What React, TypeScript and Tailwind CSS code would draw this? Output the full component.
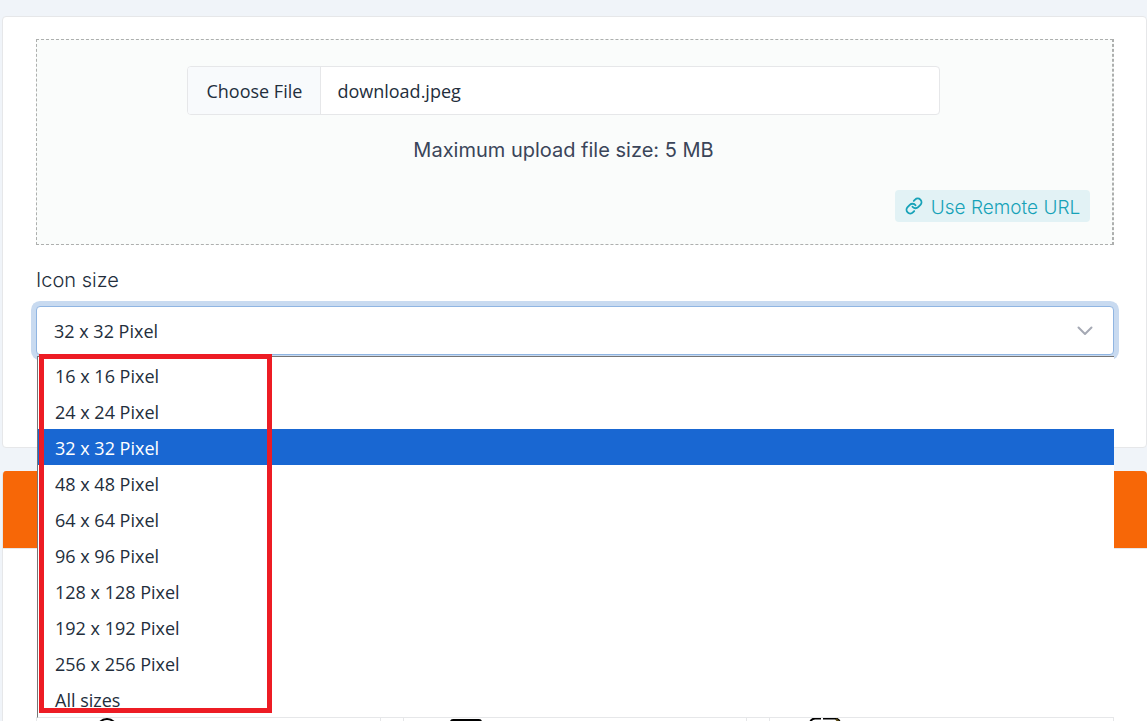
import React, { useState } from 'react';
import { Link } from 'lucide-react';

const SIZES = [
  '16 x 16 Pixel',
  '24 x 24 Pixel',
  '32 x 32 Pixel',
  '48 x 48 Pixel',
  '64 x 64 Pixel',
  '96 x 96 Pixel',
  '128 x 128 Pixel',
  '192 x 192 Pixel',
  '256 x 256 Pixel',
  'All sizes',
];

const FileField: React.FC = () => {
  const [fileName, setFileName] = useState('download.jpeg');

  return (
    <label className="flex h-[49px] w-5/7 cursor-pointer overflow-hidden rounded border border-[#e6e7e9] bg-white text-lg text-[#232e3c]">
      <span className="flex w-[133px] shrink-0 items-center justify-center border-r border-[#e6e7e9] bg-[#f8fafc]">
        Choose File
      </span>
      <span className="flex items-center px-4">{fileName}</span>
      <input
        type="file"
        className="sr-only"
        onChange={(e) => setFileName(e.target.files?.[0]?.name ?? 'download.jpeg')}
      />
    </label>
  );
};

const SizeSelect: React.FC = () => {
  const [size, setSize] = useState('32 x 32 Pixel');

  return (
    <div className="relative">
      <select
        id="icon-size"
        value={size}
        onChange={(e) => setSize(e.target.value)}
        className="block h-[49px] w-full appearance-none rounded border border-[#90b5e2] bg-white pl-[17px] pr-12 text-lg text-[#232e3c] shadow-[0_0_0_5px_#c8daf0] outline-none"
      >
        {SIZES.map((s) => (
          <option key={s}>{s}</option>
        ))}
      </select>
      <svg
        className="pointer-events-none absolute right-5 top-4 h-4 w-[18px]"
        viewBox="0 0 18 16"
        fill="none"
        stroke="#a5a9b4"
        strokeWidth="2"
        strokeLinecap="round"
        strokeLinejoin="round"
      >
        <path d="M2.5 5.5l6.5 6.5l6.5-6.5" />
      </svg>

      {/* Open option list */}
      <ul
        role="listbox"
        aria-label="Icon size options"
        className="absolute left-px right-0 top-[50px] z-10 border-y border-l border-[#767676] border-b-[#e6e7e9] bg-white text-lg text-[#232e3c]"
      >
        {SIZES.map((s) => (
          <li
            key={s}
            role="option"
            aria-selected={s === size}
            onClick={() => setSize(s)}
            className={`flex h-9 items-center pl-[17px] pt-0.5 ${s === size ? 'bg-[#1967d2] text-white' : ''}`}
          >
            {s}
          </li>
        ))}
      </ul>

      {/* Highlight frame */}
      <div className="pointer-events-none absolute left-[3px] top-12 z-20 h-[359px] w-[233px] border-[5px] border-[#ed1c24]" />
    </div>
  );
};

const ToolCard: React.FC<{ children: React.ReactNode }> = ({ children }) => (
  <div className="h-24 border border-[#e6e7e9] bg-white">{children}</div>
);

const App: React.FC = () => {
  return (
    <div className="h-screen overflow-hidden bg-[#f0f4f9] pl-0.5 pt-4 font-['Open_Sans',sans-serif]">
      <section className="rounded border border-[#e6e7e9] bg-white pb-[92px] pl-[33px] pr-8 pt-[22px]">
        <div className="border-r border-dashed border-[#adafae] bg-[#fafcfb]">
          <div className="flex flex-col items-center border border-dashed border-[#adafae] pb-[22px] pr-[22px] pt-[26px]">
            <FileField />
            <p className="mt-[21px] font-['Inter',sans-serif] text-xl leading-7 text-[#3a4559]">
              Maximum upload file size: 5 MB
            </p>
            <button
              type="button"
              className="mt-[26px] flex h-8 w-[195px] items-center justify-center gap-2 self-end rounded bg-[#e2f2f5] font-['Inter',sans-serif] text-[19px] font-light text-[#17a2b8]"
            >
              <Link size={18} strokeWidth={2.5} />
              <span className="pt-1">Use Remote URL</span>
            </button>
          </div>
        </div>

        <label
          htmlFor="icon-size"
          className="mb-[11px] mt-5 block font-['Inter',sans-serif] text-xl font-light leading-[30px] text-[#232e3c]"
        >
          Icon size
        </label>
        <SizeSelect />
      </section>

      <section className="mt-[23px] overflow-hidden rounded border-l border-[#e6e7e9] bg-white">
        <div className="h-[78px] border-b border-[#e6e7e9] bg-[#f76707]" />
        <div className="grid grid-cols-3 gap-[22px] px-[33px] pb-8 pt-[168px]">
          <ToolCard>
            <svg className="ml-[54px] h-8 w-8" viewBox="0 0 32 32" fill="none" stroke="#000" strokeWidth="2">
              <circle cx="16" cy="11" r="10" />
            </svg>
          </ToolCard>
          <ToolCard>
            <svg className="ml-[46px] h-8 w-8" viewBox="0 0 32 32" fill="#3b3f3b" stroke="#000" strokeWidth="2">
              <rect x="1" y="2" width="30" height="26" rx="2" />
            </svg>
          </ToolCard>
          <ToolCard>
            <svg className="ml-[39px] h-8 w-8" viewBox="0 0 32 32" fill="none" stroke="#000" strokeWidth="2">
              <path d="M12 0.5H6Q1 1 1 6v20M14 0.5h12q5 .5 5 5.500v20" />
              <path d="M27 1l4 4" stroke="#5b4a12" />
            </svg>
          </ToolCard>
        </div>
      </section>
    </div>
  );
};

export default App;
